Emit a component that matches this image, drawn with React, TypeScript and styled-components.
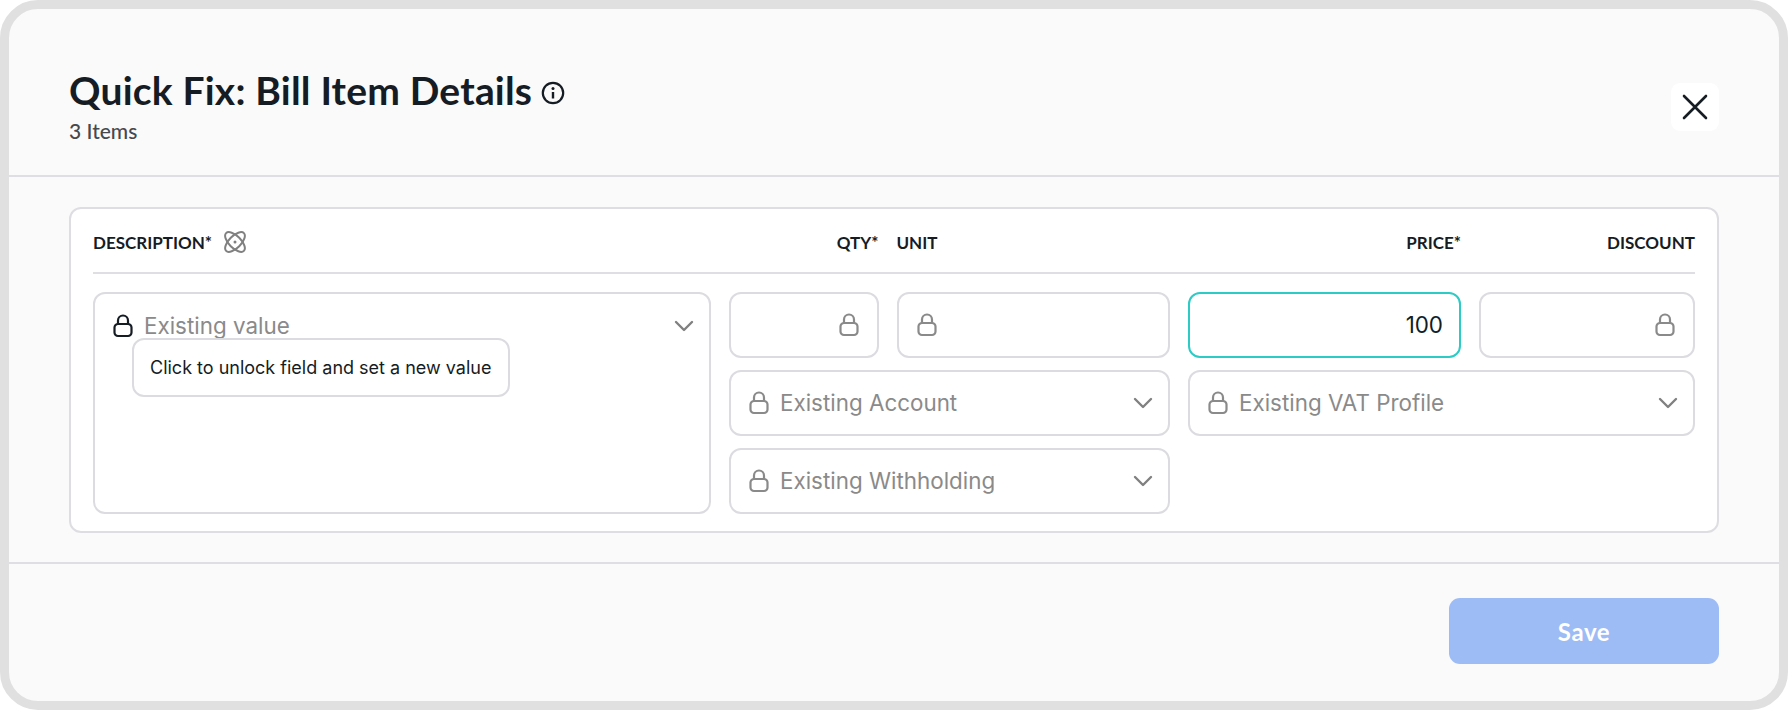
import * as React from 'react';
import styled, { createGlobalStyle } from 'styled-components';

const GlobalStyle = createGlobalStyle`
  html, body {
    margin: 0;
    padding: 0;
    background: #ffffff;
  }
  * {
    box-sizing: border-box;
  }
`;

const Modal = styled.div`
  width: 1788px;
  height: 710px;
  border: 9px solid #e0e0e0;
  border-radius: 38px;
  background: #fafafa;
  display: flex;
  flex-direction: column;
  overflow: hidden;
  font-family: Inter, "Liberation Sans", sans-serif;
  color: #151c24;
`;

const Header = styled.header`
  height: 168px;
  flex: none;
  padding: 0 60px;
  border-bottom: 2px solid #dfdfe3;
  display: flex;
  justify-content: space-between;
  align-items: flex-start;
`;

const Heading = styled.div`
  padding-top: 57px;
`;

const TitleRow = styled.div`
  display: flex;
  align-items: center;
  gap: 9px;
  height: 48px;
`;

const Title = styled.h1`
  margin: 0;
  font-family: Lato, sans-serif;
  font-size: 39px;
  line-height: 48px;
  font-weight: 700;
  letter-spacing: 0.2px;
  color: #151c24;
`;

const SubTitle = styled.div`
  margin-top: 3px;
  font-family: Lato, sans-serif;
  font-size: 21px;
  line-height: 28px;
  font-weight: 500;
  color: #45494f;
`;

const CloseButton = styled.button`
  margin-top: 74px;
  width: 48px;
  height: 48px;
  padding: 0;
  border: none;
  border-radius: 9px;
  background: #ffffff;
  display: flex;
  align-items: center;
  justify-content: center;
`;

const Body = styled.main`
  height: 387px;
  flex: none;
  padding: 30px 60px 0;
  border-bottom: 2px solid #dfdfe3;
`;

const Card = styled.section`
  height: 326px;
  padding: 0 22px 18px;
  border: 2px solid #dedee2;
  border-radius: 12px;
  background: #ffffff;
`;

const ColumnHeader = styled.div`
  height: 65px;
  padding-top: 3px;
  border-bottom: 2px solid #dfdfe3;
  display: grid;
  grid-template-columns: 618px 149.5px 273.5px 273px 1fr;
  column-gap: 18px;
  align-items: center;
  margin-bottom: 18px;
`;

const ColumnLabel = styled.div<{ $right?: boolean }>`
  display: flex;
  align-items: center;
  gap: 12px;
  justify-content: ${({ $right }) => ($right ? 'flex-end' : 'flex-start')};
  font-family: Lato, sans-serif;
  font-size: 17px;
  font-weight: 700;
  color: #151c24;
`;

const Fields = styled.div`
  display: grid;
  grid-template-columns: 618px 441px 1fr;
  column-gap: 18px;
  align-items: start;
`;

const Stack = styled.div`
  display: flex;
  flex-direction: column;
  gap: 12px;
`;

const Row = styled.div`
  display: flex;
  gap: 18px;
`;

const Field = styled.div<{ $width?: number; $active?: boolean; $end?: boolean }>`
  height: 66px;
  flex: ${({ $width }) => ($width ? `0 0 ${$width}px` : '1 1 auto')};
  padding: 0 18px;
  border: 2px solid ${({ $active }) => ($active ? '#2ccbc6' : '#dcdce0')};
  border-radius: 12px;
  background: #ffffff;
  display: flex;
  align-items: center;
  gap: 11px;
  justify-content: ${({ $end }) => ($end ? 'flex-end' : 'flex-start')};
`;

const DescriptionField = styled.div`
  position: relative;
  height: 222px;
  padding: 20px 18px 0;
  border: 2px solid #dcdce0;
  border-radius: 12px;
  background: #ffffff;
`;

const DescriptionLine = styled.div`
  height: 24px;
  display: flex;
  align-items: center;
  gap: 11px;
`;

const Placeholder = styled.span`
  flex: 1;
  font-size: 22.4px;
  line-height: 26px;
  color: #8a8a8a;
  white-space: nowrap;
`;

const Value = styled.span`
  margin-right: -2px;
  font-size: 22.4px;
  line-height: 26px;
  color: #151c24;
`;

const Tooltip = styled.div`
  position: absolute;
  left: 37px;
  top: 44px;
  width: 378px;
  height: 59px;
  padding: 0 16px;
  border: 2px solid #dcdce0;
  border-radius: 12px;
  background: #ffffff;
  display: flex;
  align-items: center;
  font-size: 18px;
  color: #151c24;
  white-space: nowrap;
`;

const Footer = styled.footer`
  flex: 1;
  padding: 34px 60px 0 0;
  display: flex;
  justify-content: flex-end;
  align-items: flex-start;
`;

const SaveButton = styled.button`
  width: 270px;
  height: 66px;
  border: none;
  border-radius: 11px;
  background: #9dbbf5;
  color: #ffffff;
  font-family: Lato, sans-serif;
  font-size: 24px;
  font-weight: 700;
  letter-spacing: 0.6px;
`;

const ChevronSvg = styled.svg`
  flex: none;
  margin-right: -3px;
`;

const LockSvg = styled.svg`
  flex: none;
`;

const InfoSvg = styled.svg`
  flex: none;
  margin-top: 5px;
`;

const LockIcon = ({ color = '#8a8a8a' }: { color?: string }) => (
  <LockSvg width="20" height="24" viewBox="0 0 20 24" fill="none">
    <path
      d="M5 10V6.5a5 5 0 0 1 10 0V10M5 10h10a3.5 3.5 0 0 1 3.5 3.5v5A3.5 3.5 0 0 1 15 22H5a3.5 3.5 0 0 1-3.5-3.5v-5A3.5 3.5 0 0 1 5 10Z"
      stroke={color}
      strokeWidth="2.2"
      strokeLinejoin="round"
    />
  </LockSvg>
);

const Chevron = () => (
  <ChevronSvg width="20" height="12" viewBox="0 0 20 12" fill="none">
    <path d="M2 2l8 8 8-8" stroke="#808080" strokeWidth="2.4" strokeLinecap="round" strokeLinejoin="round" />
  </ChevronSvg>
);

const InfoIcon = () => (
  <InfoSvg width="24" height="24" viewBox="0 0 24 24" fill="none">
    <circle cx="12" cy="12" r="10.2" stroke="#151c24" strokeWidth="2.2" />
    <path d="M12 11v6.5" stroke="#151c24" strokeWidth="2.4" />
    <circle cx="12" cy="7.4" r="1.5" fill="#151c24" />
  </InfoSvg>
);

const CloseIcon = () => (
  <svg width="26" height="26" viewBox="0 0 26 26" fill="none">
    <path d="M2 2l22 22M24 2L2 24" stroke="#151c24" strokeWidth="2.6" strokeLinecap="round" />
  </svg>
);

const AtomIcon = () => (
  <svg width="22" height="22" viewBox="0 0 22 22" fill="none">
    <ellipse cx="11" cy="11" rx="12.6" ry="6" transform="rotate(45 11 11)" stroke="#808080" strokeWidth="2" />
    <ellipse cx="11" cy="11" rx="12.6" ry="6" transform="rotate(-45 11 11)" stroke="#808080" strokeWidth="2" />
    <circle cx="11" cy="11" r="1.5" fill="#808080" />
  </svg>
);

export default function App() {
  return (
    <>
      <GlobalStyle />
      <Modal>
        <Header>
          <Heading>
            <TitleRow>
              <Title>Quick Fix: Bill Item Details</Title>
              <InfoIcon />
            </TitleRow>
            <SubTitle>3 Items</SubTitle>
          </Heading>
          <CloseButton aria-label="Close">
            <CloseIcon />
          </CloseButton>
        </Header>

        <Body>
          <Card>
            <ColumnHeader>
              <ColumnLabel>
                DESCRIPTION*
                <AtomIcon />
              </ColumnLabel>
              <ColumnLabel $right>QTY*</ColumnLabel>
              <ColumnLabel>UNIT</ColumnLabel>
              <ColumnLabel $right>PRICE*</ColumnLabel>
              <ColumnLabel $right>DISCOUNT</ColumnLabel>
            </ColumnHeader>

            <Fields>
              <DescriptionField>
                <DescriptionLine>
                  <LockIcon color="#151c24" />
                  <Placeholder>Existing value</Placeholder>
                  <Chevron />
                </DescriptionLine>
                <Tooltip>Click to unlock field and set a new value</Tooltip>
              </DescriptionField>

              <Stack>
                <Row>
                  <Field $width={149.5} $end>
                    <LockIcon />
                  </Field>
                  <Field>
                    <LockIcon />
                  </Field>
                </Row>
                <Field>
                  <LockIcon />
                  <Placeholder>Existing Account</Placeholder>
                  <Chevron />
                </Field>
                <Field>
                  <LockIcon />
                  <Placeholder>Existing Withholding</Placeholder>
                  <Chevron />
                </Field>
              </Stack>

              <Stack>
                <Row>
                  <Field $width={273} $active $end>
                    <Value>100</Value>
                  </Field>
                  <Field $end>
                    <LockIcon />
                  </Field>
                </Row>
                <Field>
                  <LockIcon />
                  <Placeholder>Existing VAT Profile</Placeholder>
                  <Chevron />
                </Field>
              </Stack>
            </Fields>
          </Card>
        </Body>

        <Footer>
          <SaveButton>Save</SaveButton>
        </Footer>
      </Modal>
    </>
  );
}
